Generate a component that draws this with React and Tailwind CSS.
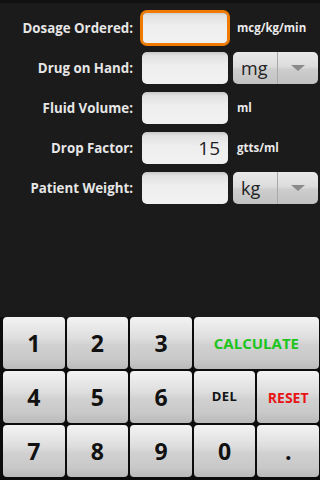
import React from "react";

const font = { fontFamily: '"Open Sans", "DejaVu Sans", sans-serif' };

const keyBg =
  "bg-[linear-gradient(to_bottom,#f3f3f3_0%,#dedede_40%,#d0d0d0_55%,#c9c9c9_80%,#bababa_100%)]";

const fieldBg =
  "bg-[linear-gradient(to_bottom,#c8c8c8_0%,#e2e2e2_12%,#eeeeee_45%,#f1f1f1_100%)]";

const Field = ({ value, focused }) => (
  <div
    className={`w-[86px] h-[32px] rounded-[5px] flex items-center justify-end pr-2 text-[19px] text-[#222] ${fieldBg} ${
      focused ? "shadow-[0_0_0_2px_#f07a00,inset_0_0_0_1px_#f07a00]" : ""
    }`}
  >
    {value}
  </div>
);

const Spinner = ({ value }) => (
  <div className="w-[85px] h-[32px] ml-[5px] rounded-[5px] flex bg-[linear-gradient(to_bottom,#e9e9e9_0%,#dcdcdc_45%,#cdcdcd_55%,#c2c2c2_100%)]">
    <div className="w-[45px] flex items-center pl-2 text-[18px] text-[#222] border-r border-[#a9a9a9]">
      {value}
    </div>
    <div className="flex-1 flex items-center justify-center">
      <svg width="16" height="8" viewBox="0 0 16 8">
        <path d="M1 1 L15 1 L8 7 Z" fill="#8a8a8a" />
      </svg>
    </div>
  </div>
);

const Unit = ({ children }) => (
  <span className="ml-[9px] text-[11.5px] font-bold text-[#eaeaea]">{children}</span>
);

const Row = ({ label, children }) => (
  <div className="h-[40px] flex items-center">
    <div className="w-[133px] text-right text-[13.3px] font-bold text-[#e6e6e6] pt-[2px]">
      {label}
    </div>
    <div className="ml-[9px] flex items-center">{children}</div>
  </div>
);

const Key = ({ children, className = "" }) => (
  <button
    className={`rounded-[4px] flex items-center justify-center font-bold ${keyBg} ${className}`}
    style={font}
  >
    {children}
  </button>
);

export default function App() {
  return (
    <div className="w-[320px] h-[480px] bg-[#1b1b1b] flex flex-col overflow-hidden" style={font}>
      <div className="h-[3px] bg-[#101010]" />
      <div className="pt-[5px]">
        <Row label="Dosage Ordered:">
          <Field focused />
          <Unit>mcg/kg/min</Unit>
        </Row>
        <Row label="Drug on Hand:">
          <Field />
          <Spinner value="mg" />
        </Row>
        <Row label="Fluid Volume:">
          <Field />
          <Unit>ml</Unit>
        </Row>
        <Row label="Drop Factor:">
          <Field value="15" />
          <Unit>gtts/ml</Unit>
        </Row>
        <Row label="Patient Weight:">
          <Field />
          <Spinner value="kg" />
        </Row>
      </div>

      <div className="flex-1" />

      <div className="grid grid-cols-5 grid-rows-[repeat(3,52px)] gap-[2px] pl-[3px] pr-[1px] pb-[3px] bg-[#0c0c0c]">
        <Key className="text-[23px] text-[#111]">1</Key>
        <Key className="text-[23px] text-[#111]">2</Key>
        <Key className="text-[23px] text-[#111]">3</Key>
        <Key className="col-span-2 text-[15px] text-[#1cc41c]">CALCULATE</Key>
        <Key className="text-[23px] text-[#111]">4</Key>
        <Key className="text-[23px] text-[#111]">5</Key>
        <Key className="text-[23px] text-[#111]">6</Key>
        <Key className="text-[13px] text-[#111] tracking-[0.5px]">DEL</Key>
        <Key className="text-[14px] text-[#e81414]">RESET</Key>
        <Key className="text-[23px] text-[#111]">7</Key>
        <Key className="text-[23px] text-[#111]">8</Key>
        <Key className="text-[23px] text-[#111]">9</Key>
        <Key className="text-[23px] text-[#111]">0</Key>
        <Key className="text-[23px] text-[#111]">.</Key>
      </div>
    </div>
  );
}
